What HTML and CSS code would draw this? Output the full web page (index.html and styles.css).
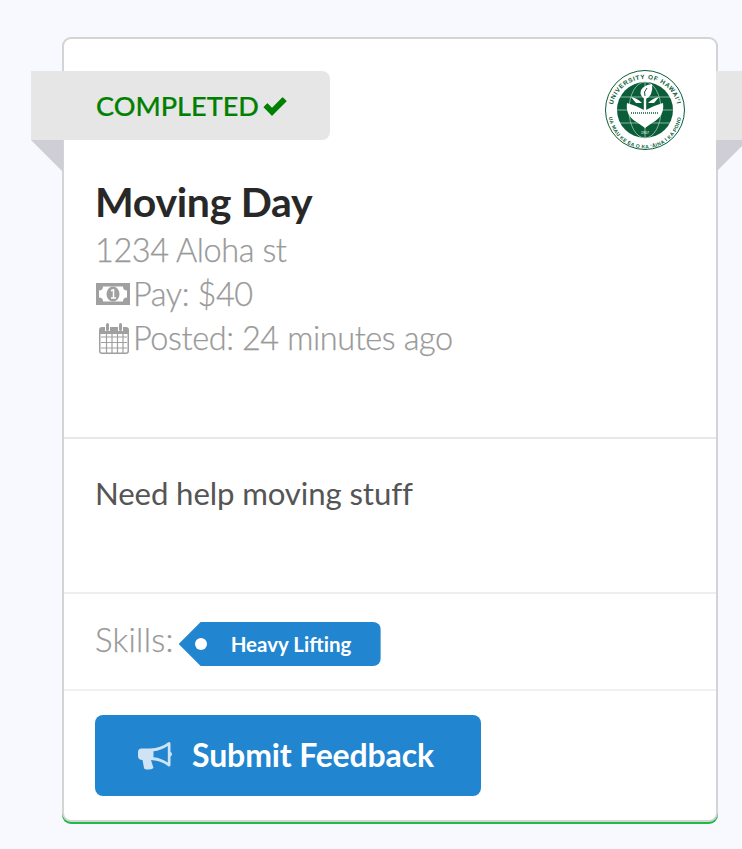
FILE: index.html
```html
<!DOCTYPE html>
<html lang="en">
<head>
<meta charset="utf-8">
<title>Moving Day</title>
<link rel="stylesheet" href="styles.css">
</head>
<body>
<main class="page">
  <article class="card">
    <div class="ribbon ribbon-left">
      <span class="status">COMPLETED</span>
      <svg class="check" viewBox="0 0 24 19" aria-hidden="true"><path d="M1.200 10.200 4.400 7 9 11.600 19.600 1 23 4.200 9 18.200Z" fill="#008000" stroke="#008000" stroke-width="1.200" stroke-linejoin="round"/></svg>
    </div>
    <div class="ribbon-right"></div>
    <div class="tail tail-left"></div>
    <div class="tail tail-right"></div>

    <section class="head">
      <svg class="seal" viewBox="0 0 80 80" role="img" aria-label="University of Hawaii seal">
        <defs>
          <path id="arc-top" d="M7 42A33 33 0 0 1 73 42"/>
          <path id="arc-bottom" d="M3.500 42A36.500 36.500 0 0 0 76.500 42"/>
        </defs>
        <circle cx="40" cy="40" r="39.500" fill="#fff" stroke="#0b5c38" stroke-width="1"/>
        <circle cx="40" cy="40" r="28" fill="#0b5c38"/>
        <text class="seal-text"><textPath href="#arc-top" startOffset="50%" text-anchor="middle">UNIVERSITY OF HAWAI‘I</textPath></text>
        <text class="seal-text seal-small"><textPath href="#arc-bottom" startOffset="50%" text-anchor="middle">UA MAU KE EA O KA ‘ĀINA I KA PONO</textPath></text>
        <g fill="none" stroke="#a5cbb8" stroke-width=".8">
          <ellipse cx="40" cy="40" rx="16" ry="28"/>
          <path d="M12 40H68M15 27H65M15 53H65M40 12V68"/>
        </g>
        <path d="M22 33Q33 36 40 41 47 36 58 33 60 46 47 53L40 58 33 53Q20 46 22 33Z" fill="#fff"/>
        <path d="M26 43H54" stroke="#0b5c38" stroke-width="1.600" stroke-dasharray="1 1"/>
        <path d="M38.800 28H41.200V41H38.800Z" fill="#fff"/>
        <path d="M40 29Q34 26 36 20Q39 15 47 14Q48 19 46 24Q44 28 40 29Z" fill="#fff"/>
        <path d="M40 26Q38 22 42 18" fill="none" stroke="#0b5c38" stroke-width="1"/>
        <path d="M26 27Q32 28 37 33L31 33ZM54 27Q48 28 43 33L49 33Z" fill="#fff"/>
        <text class="seal-year" x="40" y="63.500" text-anchor="middle">1907</text>
      </svg>
      <h1 class="title">Moving Day</h1>
      <p class="meta">1234 Aloha st</p>
      <p class="meta">
        <svg class="icon icon-money" viewBox="0 0 34 22" aria-hidden="true">
          <path fill-rule="evenodd" d="M0 0H34V22H0ZM7 3.500Q7 7.500 3 7.500V14.500Q7 14.500 7 18.500H27Q27 14.500 31 14.500V7.500Q27 7.500 27 3.500Z" fill="#a0a0a0"/>
          <ellipse cx="17" cy="11" rx="6.500" ry="7.500" fill="#a0a0a0"/>
          <path d="M15 7.800 17.500 6.800V15M15 15H20" fill="none" stroke="#fff" stroke-width="1.500"/>
        </svg>Pay: $40
      </p>
      <p class="meta">
        <svg class="icon icon-cal" viewBox="0 0 30 31" aria-hidden="true">
          <path fill="none" stroke="#a0a0a0" stroke-width="1.200" d="M2 14H28M2 19.500H28M2 25H28M7.500 10V30M13 10V30M18.500 10V30M24 10V30"/>
          <path fill-rule="evenodd" fill="#a0a0a0" d="M3 4H6V8H11V4H19V8H24V4H27Q30 4 30 7V28Q30 31 27 31H3Q0 31 0 28V7Q0 4 3 4ZM1.500 11V28Q1.500 29.500 3 29.500H27Q28.500 29.500 28.500 28V11Z"/>
          <rect x="7" y="0" width="3" height="8" rx="1.500" fill="#a0a0a0"/>
          <rect x="20" y="0" width="3" height="8" rx="1.500" fill="#a0a0a0"/>
        </svg>Posted: 24 minutes ago
      </p>
    </section>

    <section class="body">
      <p class="desc">Need help moving stuff</p>
    </section>

    <section class="skills">
      <span class="skills-label">Skills:</span>
      <span class="tag">Heavy Lifting</span>
    </section>

    <section class="actions">
      <button class="btn" type="button">
        <svg class="horn" viewBox="0 0 34 29" aria-hidden="true">
          <path fill="#cfe3f5" d="M31 1Q32.500 1 32.500 2.500V11Q34 11.500 34 13T32.500 15.500V24Q32.500 25.500 31 25.500Q30.500 25.500 30 25 23 19.500 13 19L15.500 27Q14 28.500 10 28.500 6.500 28.500 6 27L4.500 19Q0 19 0 15V11Q0 7.500 3.500 7.500H12Q23 7 30 1.500 30.500 1 31 1ZM29.800 5Q23 9.500 15.500 10.300V16.300Q23 17 29.800 21.500Z"/>
        </svg>
        <span class="btn-label">Submit Feedback</span>
      </button>
    </section>
  </article>
</main>
</body>
</html>
```
FILE: styles.css
```css
* { box-sizing: border-box; }
html, body { margin: 0; padding: 0; }
body {
  background: #f8f9ff;
  font-family: Lato, "Liberation Sans", sans-serif;
  overflow: hidden;
  height: 849px;
}
.page { padding: 37px 24px 0 62px; }
.card {
  position: relative;
  width: 656px;
  height: 785px;
  background: #fff;
  border: 2px solid #d4d4d5;
  border-radius: 9px;
  box-shadow: 0 2px 0 #21ba45;
  display: flex;
  flex-direction: column;
}
.ribbon {
  position: absolute;
  left: -33px;
  top: 32px;
  width: 299px;
  height: 69px;
  background: #e6e6e6;
  border-radius: 0 8px 8px 0;
  padding-left: 65px;
  display: flex;
  align-items: center;
  gap: 4px;
}
.status { color: #008000; font-size: 27.100px; font-weight: 500; -webkit-text-stroke: .2px #008000; }
.check { width: 24px; height: 19px; margin-top: 2px; }
.ribbon-right {
  position: absolute;
  left: 652px;
  top: 32px;
  width: 26px;
  height: 69px;
  background: #e6e6e6;
}
.tail { position: absolute; top: 101px; width: 32px; height: 32px; background: #cfced6; }
.tail-left { left: -33px; clip-path: polygon(0 0, 100% 0, 100% 100%); }
.tail-right { left: 652px; clip-path: polygon(0 0, 100% 0, 0 100%); }
.head { position: relative; height: 400px; padding: 141px 30px 0 31px; border-bottom: 2px solid #e8e8ea; }
.seal { position: absolute; right: 31px; top: 31px; width: 80px; height: 80px; }
.seal-text { font-family: "Liberation Sans", sans-serif; font-size: 6.300px; font-weight: 700; fill: #0b5c38; letter-spacing: .7px; }
.seal-small { font-size: 5px; letter-spacing: .35px; }
.seal-year { font-family: "Liberation Sans", sans-serif; font-size: 3.500px; fill: #fff; }
.title { margin: 0 0 4px; font-size: 41px; letter-spacing: -.3px; line-height: 44px; font-weight: 700; color: #282828; }
.meta { margin: 0; font-size: 32.500px; letter-spacing: -.42px; line-height: 44px; font-weight: 300; color: #999; -webkit-text-stroke: .25px #999; display: flex; align-items: center; }
.icon { flex: none; }
.icon-money { width: 34px; height: 22px; margin: 0 3px 0 1px; }
.icon-cal { width: 30px; height: 31px; margin: 0 4px 0 4px; }
.body { height: 155px; padding: 32px 31px 0; border-bottom: 2px solid #eeeef0; }
.desc { margin: 0; font-size: 31.200px; letter-spacing: -.12px; line-height: 44px; color: #555; }
.skills { height: 97px; padding: 27px 31px 0; display: flex; align-items: flex-start; border-bottom: 2px solid #f0f0f2; }
.skills-label { font-size: 33px; line-height: 36px; font-weight: 300; color: #999; -webkit-text-stroke: .25px #999; letter-spacing: .25px; }
.tag {
  position: relative;
  margin: 1px 0 0 5px;
  height: 44px;
  width: 202px;
  padding-left: 52px;
  background: #2185d0;
  color: #fff;
  font-size: 20.500px;
  font-weight: 700;
  line-height: 44px;
  border-radius: 0 8px 8px 0;
  clip-path: polygon(22px 0, 100% 0, 100% 100%, 22px 100%, 0 50%);
}
.tag::after {
  content: "";
  position: absolute;
  left: 16px;
  top: 16px;
  width: 12px;
  height: 12px;
  border-radius: 50%;
  background: #fff;
}
.actions { padding: 24px 31px 0; }
.btn {
  width: 386px;
  height: 81px;
  background: #2185d0;
  border: 0;
  border-radius: 8px;
  color: #fff;
  font-family: inherit;
  font-size: 32px;
  font-weight: 700;
  letter-spacing: -.15px;
  display: flex;
  align-items: center;
  justify-content: center;
  gap: 20px;
  padding: 0 4px 0 0;
}
.btn-label { margin-top: -2px; }
.horn { width: 34px; height: 29px; }
```
